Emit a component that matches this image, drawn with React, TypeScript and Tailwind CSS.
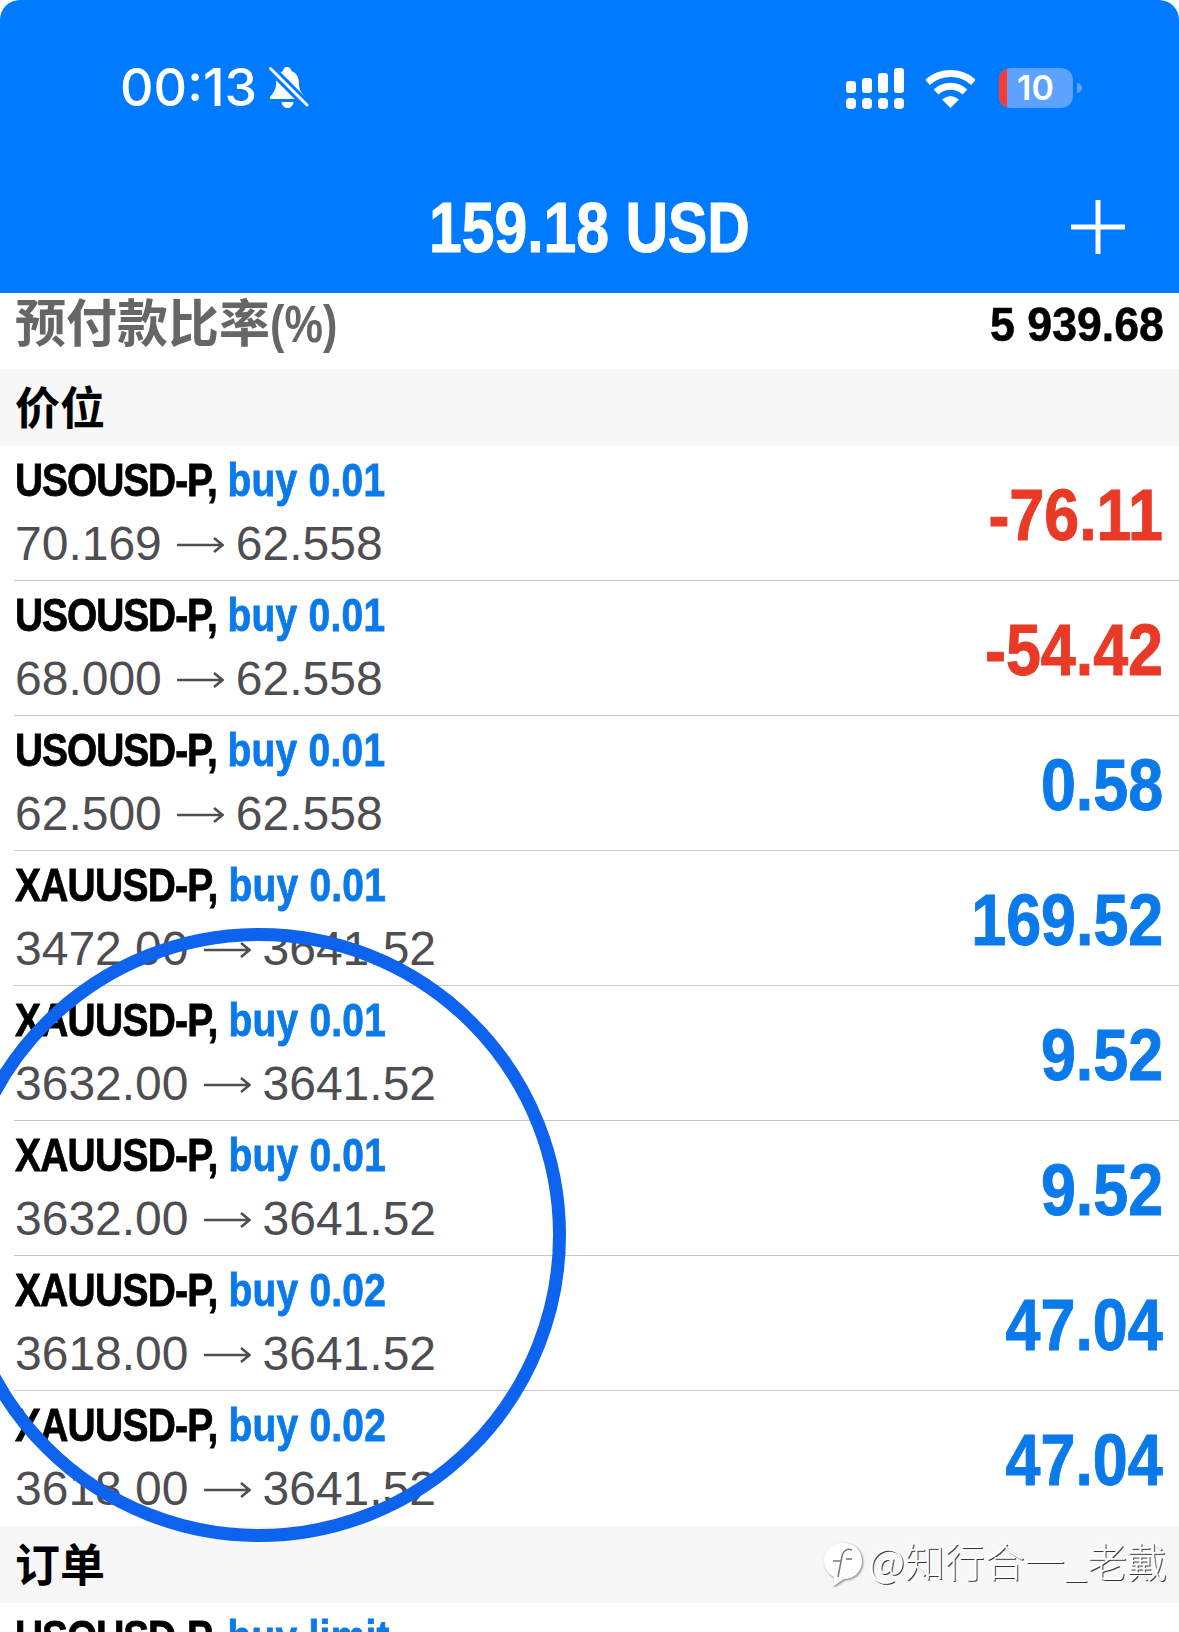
const positions = [
  { symbol: 'USOUSD-P,', lot: 'buy 0.01', open: '70.169', now: '62.558', profit: '-76.11' },
  { symbol: 'USOUSD-P,', lot: 'buy 0.01', open: '68.000', now: '62.558', profit: '-54.42' },
  { symbol: 'USOUSD-P,', lot: 'buy 0.01', open: '62.500', now: '62.558', profit: '0.58' },
  { symbol: 'XAUUSD-P,', lot: 'buy 0.01', open: '3472.00', now: '3641.52', profit: '169.52' },
  { symbol: 'XAUUSD-P,', lot: 'buy 0.01', open: '3632.00', now: '3641.52', profit: '9.52' },
  { symbol: 'XAUUSD-P,', lot: 'buy 0.01', open: '3632.00', now: '3641.52', profit: '9.52' },
  { symbol: 'XAUUSD-P,', lot: 'buy 0.02', open: '3618.00', now: '3641.52', profit: '47.04' },
  { symbol: 'XAUUSD-P,', lot: 'buy 0.02', open: '3618.00', now: '3641.52', profit: '47.04' },
];

const font = "font-['Liberation_Sans','Noto_Sans_CJK_SC',sans-serif]";

function MutedBell() {
  return (
    <svg width="40" height="43" viewBox="0 0 40 43" fill="white">
      <path d="M18 1C21 1 22 3 22.500 5C28 7 30 12 30 18C30 24 33 27 36 31Q36.500 33 34 33H3Q0 33 1 31C4 27 7 24 7 18C7 12 9 7 14 5C14.500 3 15 1 18 1Z" />
      <path d="M12.500 36H24.500C24 40 21 42 18.500 42C16 42 13 40 12.500 36Z" />
      <path d="M1 2L38 39" stroke="#007aff" strokeWidth="9" />
      <path d="M1.500 2.500L38 39" stroke="white" strokeWidth="3" strokeLinecap="round" />
    </svg>
  );
}

function Signal() {
  const bars = [12, 15, 20, 25];
  return (
    <div className="flex gap-[6px]">
      {bars.map((h, i) => (
        <div key={i} className="flex flex-col justify-end gap-[5px] w-[10px] h-[41px]">
          <div className="bg-white rounded-[3px]" style={{ height: h }} />
          <div className="bg-white rounded-[4px] h-[11px]" />
        </div>
      ))}
    </div>
  );
}

function Wifi() {
  return (
    <svg width="49" height="38" viewBox="0 0 49 38" fill="none" stroke="white" strokeWidth="7">
      <path d="M1.500 12.400A34.500 34.500 0 0 1 47.500 12.400" />
      <path d="M10 22A21.500 21.500 0 0 1 39 22" />
      <path d="M16 29.500Q24.500 22.500 33 29.500L24.500 38Z" fill="white" stroke="none" />
    </svg>
  );
}

function Battery() {
  return (
    <div className="flex items-center gap-[4px]">
      <div className="w-[74px] h-[40px] rounded-[12px] overflow-hidden bg-[#5da2ff] flex">
        <div className="w-[8px] bg-[#ff3b30]" />
        <div className="flex-1 text-center pr-[9px] font-['Inter',sans-serif] font-semibold text-[34px] leading-[40px] text-white">10</div>
      </div>
      <div className="w-[5px] h-[10px] rounded-r-full bg-[#5da2ff]" />
    </div>
  );
}

function Arrow() {
  return (
    <svg width="47" height="18" viewBox="0 0 47 18" fill="none" stroke="currentColor" strokeWidth="2.500" className="ml-[15px] mr-[12px] mt-[1px]">
      <path d="M0 9H45M37 2L45.500 9L37 16" />
    </svg>
  );
}

function Watermark() {
  return (
    <div className="absolute right-[12px] top-[1533px] flex items-center gap-[4px] text-white font-['Noto_Sans_CJK_SC',sans-serif] font-light text-[40px] leading-[44px] [text-shadow:1px_1px_0_rgba(0,0,0,0.8)]">
      <svg width="42" height="46" viewBox="0 0 40 46" className="mt-[8px] [filter:drop-shadow(1px_1px_1px_rgba(0,0,0,0.5))]">
        <path d="M20 2C31 2 39 9 39 20C39 31 31 38 21 38C17 41 13 44 9 45C11 42 12 39 11 36C5 33 1 27 1 20C1 9 9 2 20 2Z" fill="#fff" />
        <path d="M29 9C24 7 20 10 19 15L15 36M10 20H18M23 18H29" fill="none" stroke="#777" strokeWidth="1.500" />
      </svg>
      <span>@知行合一_老戴</span>
    </div>
  );
}

function SymbolLine({ symbol, lot }: { symbol: string; lot: string }) {
  return (
    <div className="origin-left scale-x-[0.846] w-[450px] font-bold text-[46px] leading-[62px] -mt-[2px] mb-[2px] [-webkit-text-stroke:0.8px]">
      <span className={`text-black ${symbol.startsWith('USO') ? 'tracking-[-1.25px]' : 'tracking-[-0.85px]'}`}>{symbol}</span>{' '}
      <span className="text-[#0a7aeb] tracking-[0.3px]">{lot}</span>
    </div>
  );
}

function PositionRow({ symbol, lot, open, now, profit, last }: (typeof positions)[number] & { last: boolean }) {
  return (
    <div className="h-[135px] pl-[15px] pr-[16px] flex justify-between relative">
      <div className="pt-[5px] whitespace-nowrap">
        <SymbolLine symbol={symbol} lot={lot} />
        <div className="flex items-center text-[48px] leading-[62px] text-[#4d4d52]">
          <span>{open}</span>
          <Arrow />
          <span>{now}</span>
        </div>
      </div>
      <div
        className={`origin-right scale-x-[0.86] self-center pt-[2px] font-bold text-[73px] leading-none [-webkit-text-stroke:1px] ${
          profit.startsWith('-') ? 'text-[#e83a26]' : 'text-[#0a7aeb]'
        }`}
      >
        {profit}
      </div>
      {!last && <div className="absolute left-[14px] right-0 bottom-0 h-px bg-[#c8c8c8]" />}
    </div>
  );
}

function SectionTitle({ children }: { children: string }) {
  return (
    <div className="h-[77px] bg-[#f7f7f7] pl-[15px] flex items-center text-black font-bold text-[45px] leading-none pt-[3px]">
      {children}
    </div>
  );
}

export default function App() {
  return (
    <div className={`relative w-[1179px] h-[1632px] overflow-hidden bg-white ${font}`}>
      {/* Top bar */}
      <header className="h-[293px] bg-[#007aff] rounded-t-[20px] text-white">
        <div className="flex justify-between pl-[120px] pr-[97px] pt-[66px] h-[190px]">
          <div className="flex items-start gap-[12px]">
            <span className="font-['Inter',sans-serif] font-medium text-[52px] leading-[44px]">00:13</span>
            <MutedBell />
          </div>
          <div className="flex items-start pt-[2px]">
            <Signal />
            <div className="pt-[2px] ml-[22px] mr-[24px]">
              <Wifi />
            </div>
            <Battery />
          </div>
        </div>
        <div className="grid grid-cols-[1fr_auto_1fr] items-center">
          <div />
          <div className="scale-x-[0.83] font-bold text-[71px] leading-[72px] mt-[2px] [-webkit-text-stroke:1px]">159.18 USD</div>
          <div className="justify-self-end pr-[54px]">
            <svg width="54" height="54" viewBox="0 0 54 54" fill="white">
              <rect x="24.500" y="0" width="5" height="54" />
              <rect x="0" y="24.500" width="54" height="5" />
            </svg>
          </div>
        </div>
      </header>

      {/* Margin level */}
      <div className="h-[76px] pl-[15px] pr-[15px] flex justify-between items-center font-bold">
        <span className="text-[#666666] text-[51px] leading-none -mt-[14px]">
          预付款比率<span className="inline-block origin-left scale-x-[0.85]">(%)</span>
        </span>
        <span className="origin-right scale-x-[0.93] text-black text-[48px] leading-none -mt-[12px] [-webkit-text-stroke:0.6px]">5 939.68</span>
      </div>

      <SectionTitle>价位</SectionTitle>
      {positions.map((p, i) => (
        <PositionRow key={i} {...p} last={i === positions.length - 1} />
      ))}
      <SectionTitle>订单</SectionTitle>
      <div className="pl-[15px] pt-[5px] whitespace-nowrap">
        <SymbolLine symbol="USOUSD-P," lot="buy limit" />
      </div>

      {/* Hand-drawn ring over the list */}
      <svg className="absolute left-0 top-[928px]" width="570" height="614" viewBox="0 0 570 614" fill="none">
        <circle cx="259" cy="307" r="300.500" stroke="#0e63ee" strokeWidth="13" />
      </svg>

      <Watermark />
    </div>
  );
}
